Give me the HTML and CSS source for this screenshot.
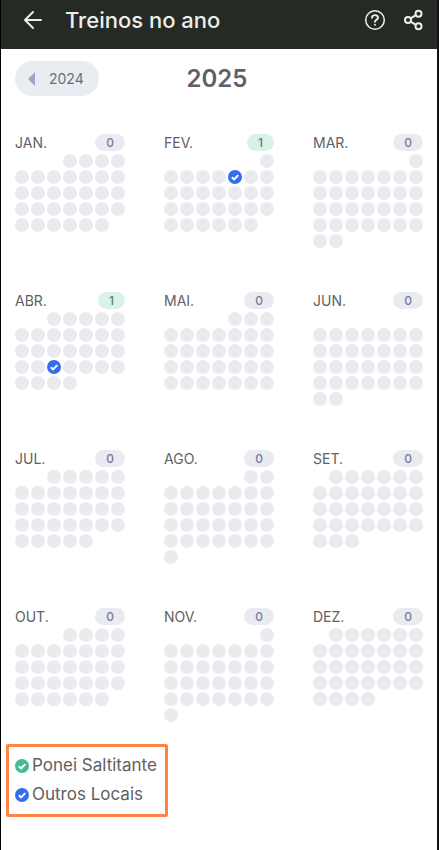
FILE: index.html
```html
<!DOCTYPE html>
<html lang="pt">
<head>
  <meta charset="UTF-8" />
  <meta name="viewport" content="width=device-width, initial-scale=1.0"/>
  <title>Treinos no ano</title>
  <link rel="stylesheet" href="styles.css">
</head>
<body>
  <header class="topbar">
    <button type="button" class="icon-btn" aria-label="Voltar">
      <svg width="20" height="20" viewBox="0 0 20 20" fill="none" stroke="currentColor" stroke-width="2" stroke-linecap="round" stroke-linejoin="round"><path d="M18 10H2M10 2l-8 8 8 8"/></svg>
    </button>
    <h1>Treinos no ano</h1>
    <button type="button" class="icon-btn" aria-label="Ajuda">
      <svg width="22" height="22" viewBox="0 0 22 22" fill="none" stroke="currentColor" stroke-linecap="round" stroke-linejoin="round"><circle cx="11" cy="11" r="9.300" stroke-width="1.500"/><path d="M8 8.700C8 5.300 14 5.300 14 8.700c0 2-3 2.100-3 4" stroke-width="1.900"/><circle cx="11" cy="15.700" r=".4" stroke-width="1.300"/></svg>
    </button>
    <button type="button" class="icon-btn" aria-label="Partilhar">
      <svg width="22" height="22" viewBox="0 0 22 22" fill="none" stroke="currentColor" stroke-width="2"><circle cx="5" cy="11" r="3"/><circle cx="15.500" cy="4.700" r="3"/><circle cx="15.500" cy="17.300" r="3"/><path d="M7.600 9.400l5.300-3.200M7.600 12.600l5.300 3.200"/></svg>
    </button>
  </header>

  <main>
    <div class="year-nav">
      <button type="button" class="prev-year">
        <svg width="7" height="14" viewBox="0 0 7 14" fill="#a3a4c4"><path d="M7 0v14L0 7z"/></svg>
        2024
      </button>
      <h2>2025</h2>
    </div>

    <div class="months" id="months"></div>

    <ul class="legend">
      <li><svg class="check green" viewBox="0 0 14 14"><circle cx="7" cy="7" r="7"/><path d="M3.800 7.200l2.300 2.200 4.200-4.300"/></svg>Ponei Saltitante</li>
      <li><svg class="check blue" viewBox="0 0 14 14"><circle cx="7" cy="7" r="7"/><path d="M3.800 7.200l2.300 2.200 4.200-4.300"/></svg>Outros Locais</li>
    </ul>
  </main>

  <script src="script.js"></script>
</body>
</html>
```

FILE: styles.css
```css
* {
  box-sizing: border-box;
}

body {
  margin: 0;
  min-height: 100vh;
  border-left: 1px solid #000;
  border-right: 2px solid #111;
  background: #fff;
  color: #5f6063;
  font-family: Inter, "Liberation Sans", sans-serif;
}

h1, h2, h3 {
  margin: 0;
}

button {
  border: 0;
  font-family: inherit;
  cursor: pointer;
}

.topbar {
  display: flex;
  align-items: center;
  height: 49px;
  padding: 0 12px 10px 22px;
  background: #262a25;
  color: #eeeeea;
}

.topbar h1 {
  flex: 1;
  margin-left: 22px;
  font-size: 22px;
  line-height: 28px;
  font-weight: 500;
}

.icon-btn {
  display: flex;
  padding: 0;
  background: none;
  color: inherit;
}

.icon-btn + .icon-btn {
  margin-left: 17px;
}

main {
  padding: 12px 14px 32px;
}

.year-nav {
  display: grid;
  grid-template-columns: 1fr auto 1fr;
  align-items: center;
  padding-right: 4px;
}

.prev-year {
  display: flex;
  align-items: center;
  justify-self: start;
  gap: 14px;
  height: 35px;
  padding: 0 15px 0 13px;
  border-radius: 18px;
  background: #e9ecf0;
  color: #6d6e74;
  font-size: 14px;
}

.year-nav h2 {
  font-size: 24px;
  line-height: 34px;
  font-weight: 600;
}

.months {
  display: grid;
  grid-template-columns: repeat(3, 110px);
  justify-content: space-between;
  row-gap: 44px;
  margin-top: 38px;
}

.month {
  min-height: 114px;
}

.month-head {
  display: flex;
  align-items: center;
  justify-content: space-between;
  height: 17px;
  margin-bottom: 3px;
}

.month-head h3 {
  font-size: 14px;
  font-weight: 400;
}

.count {
  width: 30px;
  border-radius: 9px;
  background: #e9ebf0;
  color: #77799c;
  font-size: 12px;
  line-height: 17px;
  font-weight: 500;
  text-align: center;
}

.count.active {
  width: 27px;
  background: #d8f2e8;
  color: #667c75;
}

.days {
  display: grid;
  grid-template-columns: repeat(7, 14px);
  grid-auto-rows: 14px;
  gap: 2px;
}

.day {
  border-radius: 50%;
  background: #e9ebef;
}

.check {
  width: 14px;
  height: 14px;
}

.check path {
  fill: none;
  stroke: #fff;
  stroke-width: 2;
}

.blue {
  fill: #356df0;
}

.green {
  fill: #46bd91;
}

.legend {
  width: fit-content;
  margin: 22px 0 0 -9px;
  padding: 4px 8px 5px 6px;
  border: 3px solid #ff8441;
  border-radius: 2px;
  list-style: none;
  font-size: 17px;
  line-height: 29px;
}

.legend li {
  display: flex;
  align-items: center;
  gap: 3px;
}
```

FILE: script.js
```js
// offset = empty cells before day 1
const months = [
  { name: 'JAN.', offset: 3, days: 31 },
  { name: 'FEV.', offset: 6, days: 28, done: [6] },
  { name: 'MAR.', offset: 6, days: 31 },
  { name: 'ABR.', offset: 2, days: 30, done: [22] },
  { name: 'MAI.', offset: 4, days: 31 },
  { name: 'JUN.', offset: 7, days: 30 },
  { name: 'JUL.', offset: 2, days: 31 },
  { name: 'AGO.', offset: 5, days: 31 },
  { name: 'SET.', offset: 1, days: 30 },
  { name: 'OUT.', offset: 3, days: 31 },
  { name: 'NOV.', offset: 6, days: 30 },
  { name: 'DEZ.', offset: 1, days: 31 }
];

const check = '<svg class="check blue" viewBox="0 0 14 14"><circle cx="7" cy="7" r="7"/><path d="M3.8 7.2l2.3 2.2 4.2-4.3"/></svg>';

document.getElementById('months').innerHTML = months.map(month => {
  const done = month.done || [];
  let cells = '<span></span>'.repeat(month.offset);
  for (let day = 1; day <= month.days; day++) {
    cells += done.includes(day) ? check : '<span class="day"></span>';
  }
  return `
    <section class="month">
      <div class="month-head">
        <h3>${month.name}</h3>
        <span class="count ${done.length ? 'active' : ''}">${done.length}</span>
      </div>
      <div class="days">${cells}</div>
    </section>`;
}).join('');
```
